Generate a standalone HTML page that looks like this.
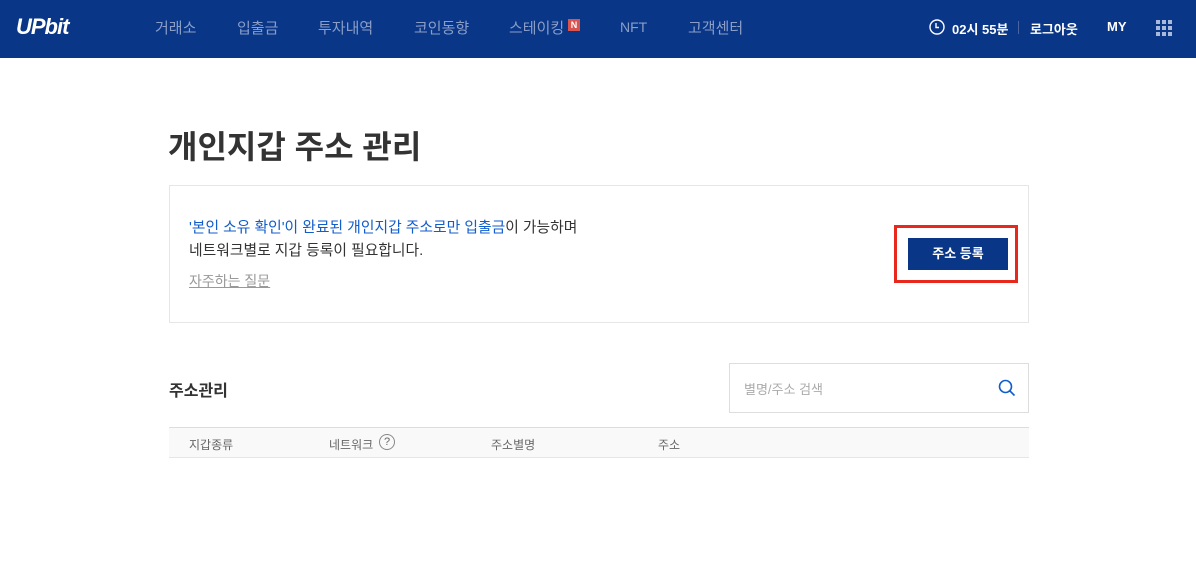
<!DOCTYPE html>
<html><head><meta charset="utf-8"><style>
*{margin:0;padding:0;box-sizing:border-box}
body{width:1196px;height:565px;background:#fff;font-family:"Liberation Sans","Noto Sans CJK KR",sans-serif;position:relative;overflow:hidden;color:#333}
.hd{position:absolute;left:0;top:0;width:1196px;height:58px;background:#093687}
.a{position:absolute;white-space:nowrap}
.nav{color:#8a9ec8;font-size:15px;top:17px}
.w{color:#fff;font-size:13px;font-weight:bold;top:19px}
</style></head><body>
<div class="hd">
<div class="a" style="left:16px;top:14px;color:#fff;font-size:22px;font-weight:bold;font-style:italic;letter-spacing:-1px">UPbit</div>
<div class="a nav" style="left:155px">거래소</div>
<div class="a nav" style="left:237px">입출금</div>
<div class="a nav" style="left:318px">투자내역</div>
<div class="a nav" style="left:414px">코인동향</div>
<div class="a nav" style="left:509px">스테이킹</div>
<div class="a" style="left:568px;top:19px;width:12px;height:12px;background:#d9534f;color:#fff;font-size:9px;font-weight:bold;text-align:center;line-height:12px">N</div>
<div class="a nav" style="left:620px;top:19px;font-size:14px">NFT</div>
<div class="a nav" style="left:688px">고객센터</div>
<svg class="a" style="left:929px;top:19px" width="16" height="16" viewBox="0 0 16 16"><circle cx="8" cy="8" r="7" fill="none" stroke="#fff" stroke-width="1.4"/><path d="M7 4v4.5h3" fill="none" stroke="#fff" stroke-width="1.4"/></svg>
<div class="a w" style="left:952px">02시 55분</div>
<div class="a" style="left:1018px;top:21px;width:1px;height:13px;background:#4a64a0"></div>
<div class="a w" style="left:1030px">로그아웃</div>
<div class="a w" style="left:1107px">MY</div>
<div class="a" style="left:1156px;top:20px;width:16px;height:16px;display:grid;grid-template-columns:repeat(3,4px);grid-template-rows:repeat(3,4px);gap:2px">
<i style="background:#a9b9dc"></i><i style="background:#a9b9dc"></i><i style="background:#a9b9dc"></i><i style="background:#a9b9dc"></i><i style="background:#a9b9dc"></i><i style="background:#a9b9dc"></i><i style="background:#a9b9dc"></i><i style="background:#a9b9dc"></i><i style="background:#a9b9dc"></i></div>
</div>
<div class="a" style="left:168px;top:122px;font-size:32px;font-weight:bold;color:#333">개인지갑 주소 관리</div>
<div class="a" style="left:169px;top:185px;width:860px;height:138px;border:1px solid #e6e6e6"></div>
<div class="a" style="left:189px;top:217px;font-size:14.8px;color:#333;line-height:23px"><span style="color:#115dcb">'본인 소유 확인'이 완료된 개인지갑 주소로만 입출금</span>이 가능하며<br>네트워크별로 지갑 등록이 필요합니다.</div>
<div class="a" style="left:189px;top:271px;font-size:14px;color:#999;text-decoration:underline">자주하는 질문</div>
<div class="a" style="left:894px;top:225px;width:124px;height:58px;border:3px solid #e8281d"></div>
<div class="a" style="left:908px;top:238px;width:100px;height:32px;background:#093687;color:#fff;font-size:13px;font-weight:bold;text-align:center;line-height:32px">주소 등록</div>
<div class="a" style="left:169px;top:377px;font-size:16px;font-weight:bold;color:#333">주소관리</div>
<div class="a" style="left:729px;top:363px;width:300px;height:50px;border:1px solid #ddd"></div>
<div class="a" style="left:744px;top:379px;font-size:13px;color:#aaa">별명/주소 검색</div>
<svg class="a" style="left:998px;top:379px" width="18" height="18" viewBox="0 0 18 18"><circle cx="7.5" cy="7.5" r="6" fill="none" stroke="#115dcb" stroke-width="1.6"/><path d="M12 12l4.5 4.5" stroke="#115dcb" stroke-width="1.6"/></svg>
<div class="a" style="left:169px;top:427px;width:860px;height:31px;background:#f9f9f9;border-top:1px solid #ddd;border-bottom:1px solid #e6e6e6"></div>
<div class="a" style="left:189px;top:436px;font-size:12px;color:#666">지갑종류</div>
<div class="a" style="left:329px;top:436px;font-size:12px;color:#666">네트워크</div>
<div class="a" style="left:379px;top:434px;width:16px;height:16px;border:1px solid #888;border-radius:50%;font-size:11px;color:#666;text-align:center;line-height:14px">?</div>
<div class="a" style="left:491px;top:436px;font-size:12px;color:#666">주소별명</div>
<div class="a" style="left:658px;top:436px;font-size:12px;color:#666">주소</div>
</body></html>
